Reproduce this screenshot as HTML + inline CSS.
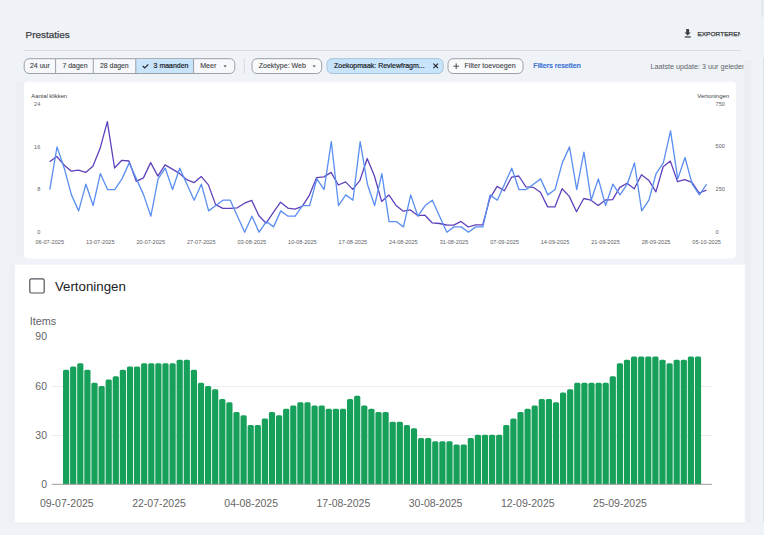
<!DOCTYPE html>
<html><head><meta charset="utf-8">
<style>
html,body{margin:0;padding:0;}
body{width:764px;height:535px;overflow:hidden;background:#eff3f8;position:relative;font-family:"Liberation Sans",sans-serif;}
.abs{position:absolute;white-space:nowrap;}
</style></head><body>
<div class="abs" style="left:744px;top:60px;width:6.5px;height:462px;background:#ebeef2"></div><div class="abs" style="left:762.5px;top:58px;width:1.5px;height:464px;background:#dfe1e4"></div><div class="abs" style="left:761px;top:0;width:3px;height:17px;background:#e6e9ed"></div>
<svg class="abs" style="left:0;top:0" width="764" height="535" viewBox="0 0 764 535" font-family="Liberation Sans, sans-serif">
  <defs><clipPath id="clipE"><rect x="600" y="0" width="140.2" height="50"/></clipPath>
  <clipPath id="clipL"><rect x="600" y="50" width="143.8" height="30"/></clipPath></defs>
  <rect x="23.8" y="81.7" width="712.2" height="176.9" rx="4" fill="#fff"/>
  <rect x="15" y="264.8" width="729.8" height="258" fill="#fff"/>
  <rect x="15" y="522.8" width="729.8" height="1" fill="#e6e9ee"/>
  <!-- header -->
  <text x="25.5" y="38.4" font-size="9.8" fill="#3c4043" stroke="#3c4043" stroke-width="0.25" textLength="44.3" lengthAdjust="spacingAndGlyphs">Prestaties</text>
  <line x1="24" y1="50.5" x2="741" y2="50.5" stroke="#d8dce2" stroke-width="1"/>
  <!-- export -->
  <g fill="#3c4043">
    <path d="M686.2,29.1 h2.9 v3.3 h1.7 l-3.15,3.2 l-3.15,-3.2 h1.7 z"/>
    <rect x="684.8" y="36.3" width="6" height="1.3"/>
  </g>
  <text x="697.4" y="35.8" font-size="6.1" fill="#3c4043" stroke="#3c4043" stroke-width="0.25" textLength="45" lengthAdjust="spacingAndGlyphs" clip-path="url(#clipE)">EXPORTEREN</text>
  <!-- button group -->
  <rect x="24.2" y="58.7" width="210.6" height="14.8" rx="5" fill="#f6f8fb" stroke="#9aa0a6" stroke-width="1"/>
  <path d="M135.8,59.2 H193.6 V73 H135.8 Z" fill="#c7e4fb"/>
  <line x1="55.6" y1="59" x2="55.6" y2="73.3" stroke="#9aa0a6"/>
  <line x1="93.3" y1="59" x2="93.3" y2="73.3" stroke="#9aa0a6"/>
  <line x1="135.8" y1="59" x2="135.8" y2="73.3" stroke="#9aa0a6"/>
  <line x1="193.6" y1="59" x2="193.6" y2="73.3" stroke="#9aa0a6"/>
  <g font-size="7.2" fill="#3c4043" stroke="#3c4043" stroke-width="0.1">
    <text x="29.9" y="68.3" textLength="19.9" lengthAdjust="spacingAndGlyphs">24 uur</text>
    <text x="62.4" y="68.3" textLength="25.1" lengthAdjust="spacingAndGlyphs">7 dagen</text>
    <text x="100" y="68.3" textLength="28.7" lengthAdjust="spacingAndGlyphs">28 dagen</text>
    <text x="153.6" y="68.3" fill="#202124" stroke="#202124" stroke-width="0.2" textLength="34.8" lengthAdjust="spacingAndGlyphs">3 maanden</text>
    <text x="200.2" y="68.3" textLength="16.2" lengthAdjust="spacingAndGlyphs">Meer</text>
  </g>
  <path d="M142.8,66 l1.9,1.9 l3.6,-3.6" fill="none" stroke="#202124" stroke-width="1.1"/>
  <path d="M223.6,65.6 h3 l-1.5,1.6 z" fill="#3c4043"/>
  <line x1="244.3" y1="58.5" x2="244.3" y2="73.8" stroke="#d5d9de"/>
  <!-- chips -->
  <rect x="252" y="58.7" width="69.7" height="14.8" rx="5" fill="#f8fafc" stroke="#9aa0a6"/>
  <text x="258.7" y="68.3" font-size="7.2" fill="#3c4043" stroke="#3c4043" stroke-width="0.1" textLength="47.2" lengthAdjust="spacingAndGlyphs">Zoektype: Web</text>
  <path d="M312.7,65.6 h3 l-1.5,1.6 z" fill="#3c4043"/>
  <rect x="327" y="58.7" width="116.2" height="14.8" rx="5" fill="#c7e4fb" stroke="#a9c3d9"/>
  <text x="334" y="68.3" font-size="7.2" fill="#202124" stroke="#202124" stroke-width="0.2" textLength="90.6" lengthAdjust="spacingAndGlyphs">Zoekopmaak: Reviewfragm...</text>
  <path d="M433.4,63.6 l4.6,4.6 M438,63.6 l-4.6,4.6" stroke="#202124" stroke-width="1.1"/>
  <rect x="448" y="58.7" width="75" height="14.8" rx="5" fill="#f8fafc" stroke="#9aa0a6"/>
  <path d="M456.2,63.4 v5.6 M453.4,66.2 h5.6" stroke="#3c4043" stroke-width="0.9"/>
  <text x="464.5" y="68.3" font-size="7.2" fill="#3c4043" stroke="#3c4043" stroke-width="0.1" textLength="51.1" lengthAdjust="spacingAndGlyphs">Filter toevoegen</text>
  <text x="533.3" y="68.3" font-size="7.2" fill="#1a5fd0" stroke="#1a5fd0" stroke-width="0.2" textLength="47.5" lengthAdjust="spacingAndGlyphs">Filters resetten</text>
  <text x="650.4" y="68.6" font-size="7.3" fill="#5f6368" clip-path="url(#clipL)" textLength="95.6" lengthAdjust="spacingAndGlyphs">Laatste update: 3 uur geleden</text>
</svg>
<!-- top card -->
<div class="abs" style="left:16px;top:82px;width:7.8px;height:174px;background:#ecf0f4"></div><div class="abs" style="left:8.5px;top:264px;width:6.5px;height:260px;background:#ecf0f4"></div>
<svg class="abs" style="left:0;top:0" width="764" height="535" viewBox="0 0 764 535" font-family="Liberation Sans, sans-serif">
  <g font-size="5.6" fill="#5f6368">
    <text x="31.3" y="97.5" fill="#3c4043" textLength="35.8" lengthAdjust="spacingAndGlyphs">Aantal klikken</text>
    <text x="40.3" y="105.6" text-anchor="end">24</text>
    <text x="40.3" y="148.6" text-anchor="end">16</text>
    <text x="40.3" y="190.8" text-anchor="end">8</text>
    <text x="40.3" y="233.6" text-anchor="end">0</text>
    <text x="697.3" y="97.5" fill="#3c4043" textLength="31.8" lengthAdjust="spacingAndGlyphs">Vertoningen</text>
    <text x="715.6" y="105.6">750</text>
    <text x="715.6" y="148.4">500</text>
    <text x="715.6" y="191.2">250</text>
    <text x="715.6" y="233.6">0</text>
    <text x="49.70" y="244.3" text-anchor="middle">06-07-2025</text>
<text x="100.23" y="244.3" text-anchor="middle">13-07-2025</text>
<text x="150.76" y="244.3" text-anchor="middle">20-07-2025</text>
<text x="201.29" y="244.3" text-anchor="middle">27-07-2025</text>
<text x="251.82" y="244.3" text-anchor="middle">03-08-2025</text>
<text x="302.35" y="244.3" text-anchor="middle">10-08-2025</text>
<text x="352.88" y="244.3" text-anchor="middle">17-08-2025</text>
<text x="403.41" y="244.3" text-anchor="middle">24-08-2025</text>
<text x="453.94" y="244.3" text-anchor="middle">31-08-2025</text>
<text x="504.47" y="244.3" text-anchor="middle">07-09-2025</text>
<text x="555.00" y="244.3" text-anchor="middle">14-09-2025</text>
<text x="605.53" y="244.3" text-anchor="middle">21-09-2025</text>
<text x="656.06" y="244.3" text-anchor="middle">28-09-2025</text>
<text x="706.59" y="244.3" text-anchor="middle">05-10-2025</text>
  </g>
  <polyline points="49.60,161.70 56.82,156.50 64.04,164.90 71.25,171.20 78.47,170.10 85.69,172.40 92.91,166.30 100.13,148.30 107.34,121.70 114.56,168.00 121.78,160.30 129.00,161.00 136.22,181.30 143.43,177.90 150.65,162.60 157.87,176.10 165.09,164.90 172.31,169.10 179.52,173.40 186.74,179.70 193.96,182.70 201.18,176.40 208.40,184.90 215.61,204.60 222.83,208.40 230.05,208.40 237.27,207.80 244.49,203.20 251.70,200.40 258.92,215.80 266.14,223.20 273.36,212.30 280.58,202.20 287.79,208.10 295.01,209.20 302.23,206.40 309.45,195.10 316.67,177.60 323.88,176.90 331.10,172.40 338.32,185.00 345.54,181.90 352.76,189.40 359.97,180.30 367.19,158.50 374.41,176.00 381.63,201.40 388.85,194.90 396.06,205.40 403.28,211.20 410.50,209.90 417.72,215.60 424.94,215.20 432.15,222.80 439.37,223.50 446.59,225.00 453.81,225.20 461.03,221.40 468.24,227.00 475.46,224.90 482.68,224.90 489.90,198.40 497.12,186.40 504.33,190.80 511.55,177.20 518.77,176.00 525.99,186.90 533.21,187.30 540.42,192.20 547.64,206.90 554.86,206.90 562.08,188.70 569.30,196.40 576.51,211.70 583.73,198.50 590.95,200.20 598.17,205.50 605.39,200.00 612.60,199.60 619.82,187.40 627.04,183.20 634.26,188.80 641.48,174.70 648.69,180.20 655.91,191.90 663.13,166.70 670.35,161.10 677.57,181.70 684.78,179.70 692.00,182.40 699.22,193.00 706.44,190.20" fill="none" stroke="#5f42bb" stroke-width="1.3" stroke-linejoin="round"/>
  <polyline points="49.80,189.54 57.02,146.87 64.24,168.20 71.45,194.87 78.67,210.87 85.89,184.20 93.11,205.53 100.33,173.54 107.54,189.54 114.76,189.54 121.98,178.87 129.20,162.87 136.42,178.87 143.63,194.87 150.85,216.20 158.07,178.87 165.29,168.20 172.51,189.54 179.72,168.20 186.94,184.20 194.16,200.20 201.38,184.20 208.60,210.87 215.81,205.53 223.03,200.20 230.25,200.20 237.47,216.20 244.69,232.20 251.90,216.20 259.12,232.20 266.34,221.53 273.56,226.87 280.78,210.87 287.99,216.20 295.21,216.20 302.43,205.53 309.65,205.53 316.87,178.87 324.08,189.54 331.30,141.54 338.52,205.53 345.74,194.87 352.96,200.20 360.17,141.54 367.39,184.20 374.61,205.53 381.83,173.54 389.05,221.53 396.26,221.53 403.48,226.87 410.70,194.87 417.92,216.20 425.14,205.53 432.35,200.20 439.57,216.20 446.79,232.20 454.01,226.87 461.23,226.87 468.44,232.20 475.66,226.87 482.88,226.87 490.10,194.87 497.32,200.20 504.53,184.20 511.75,168.20 518.97,189.54 526.19,189.54 533.41,184.20 540.62,178.87 547.84,194.87 555.06,189.54 562.28,162.87 569.50,146.87 576.71,189.54 583.93,152.20 591.15,200.20 598.37,178.87 605.59,205.53 612.80,184.20 620.02,194.87 627.24,184.20 634.46,162.87 641.68,210.87 648.89,200.20 656.11,173.54 663.33,162.87 670.55,130.87 677.77,178.87 684.98,157.54 692.20,184.20 699.42,194.87 706.64,184.20" fill="none" stroke="#5a8ef0" stroke-width="1.3" stroke-linejoin="round"/>
</svg>
<!-- bottom card -->

<svg class="abs" style="left:0;top:0" width="764" height="535" viewBox="0 0 764 535" font-family="Liberation Sans, sans-serif">
  <rect x="29.8" y="278.8" width="14.4" height="14.2" rx="1.5" fill="none" stroke="#4f5358" stroke-width="1.2"/>
  <text x="54.9" y="291.2" font-size="13.3" fill="#202124">Vertoningen</text>
  <text x="29.7" y="324.8" font-size="10.3" fill="#5f6368" textLength="26.6" lengthAdjust="spacingAndGlyphs">Items</text>
  <g font-size="10.5" fill="#666" text-anchor="end">
    <text x="47" y="339.9">90</text>
    <text x="47" y="390">60</text>
    <text x="47" y="438.9">30</text>
    <text x="47" y="487.8">0</text>
  </g>
  <g stroke="#ececec" stroke-width="1">
    <line x1="51.2" y1="386.6" x2="711.9" y2="386.6"/>
    <line x1="51.2" y1="435.5" x2="711.9" y2="435.5"/>
  </g>
  <g fill="#16a05a">
<path d="M63.00,484.3 V371.14 Q63.00,369.64 64.50,369.64 H67.70 Q69.20,369.64 69.20,371.14 V484.3 Z"/>
<path d="M70.10,484.3 V367.88 Q70.10,366.38 71.60,366.38 H74.80 Q76.30,366.38 76.30,367.88 V484.3 Z"/>
<path d="M77.20,484.3 V364.63 Q77.20,363.13 78.70,363.13 H81.90 Q83.40,363.13 83.40,364.63 V484.3 Z"/>
<path d="M84.30,484.3 V371.14 Q84.30,369.64 85.80,369.64 H89.00 Q90.50,369.64 90.50,371.14 V484.3 Z"/>
<path d="M91.40,484.3 V384.16 Q91.40,382.66 92.90,382.66 H96.10 Q97.60,382.66 97.60,384.16 V484.3 Z"/>
<path d="M98.50,484.3 V387.42 Q98.50,385.92 100.00,385.92 H103.20 Q104.70,385.92 104.70,387.42 V484.3 Z"/>
<path d="M105.60,484.3 V380.91 Q105.60,379.41 107.10,379.41 H110.30 Q111.80,379.41 111.80,380.91 V484.3 Z"/>
<path d="M112.70,484.3 V377.65 Q112.70,376.15 114.20,376.15 H117.40 Q118.90,376.15 118.90,377.65 V484.3 Z"/>
<path d="M119.80,484.3 V371.14 Q119.80,369.64 121.30,369.64 H124.50 Q126.00,369.64 126.00,371.14 V484.3 Z"/>
<path d="M126.90,484.3 V367.88 Q126.90,366.38 128.40,366.38 H131.60 Q133.10,366.38 133.10,367.88 V484.3 Z"/>
<path d="M134.00,484.3 V367.88 Q134.00,366.38 135.50,366.38 H138.70 Q140.20,366.38 140.20,367.88 V484.3 Z"/>
<path d="M141.10,484.3 V364.63 Q141.10,363.13 142.60,363.13 H145.80 Q147.30,363.13 147.30,364.63 V484.3 Z"/>
<path d="M148.20,484.3 V364.63 Q148.20,363.13 149.70,363.13 H152.90 Q154.40,363.13 154.40,364.63 V484.3 Z"/>
<path d="M155.30,484.3 V364.63 Q155.30,363.13 156.80,363.13 H160.00 Q161.50,363.13 161.50,364.63 V484.3 Z"/>
<path d="M162.40,484.3 V364.63 Q162.40,363.13 163.90,363.13 H167.10 Q168.60,363.13 168.60,364.63 V484.3 Z"/>
<path d="M169.50,484.3 V364.63 Q169.50,363.13 171.00,363.13 H174.20 Q175.70,363.13 175.70,364.63 V484.3 Z"/>
<path d="M176.60,484.3 V361.37 Q176.60,359.87 178.10,359.87 H181.30 Q182.80,359.87 182.80,361.37 V484.3 Z"/>
<path d="M183.70,484.3 V361.37 Q183.70,359.87 185.20,359.87 H188.40 Q189.90,359.87 189.90,361.37 V484.3 Z"/>
<path d="M190.80,484.3 V371.14 Q190.80,369.64 192.30,369.64 H195.50 Q197.00,369.64 197.00,371.14 V484.3 Z"/>
<path d="M197.90,484.3 V384.16 Q197.90,382.66 199.40,382.66 H202.60 Q204.10,382.66 204.10,384.16 V484.3 Z"/>
<path d="M205.00,484.3 V387.42 Q205.00,385.92 206.50,385.92 H209.70 Q211.20,385.92 211.20,387.42 V484.3 Z"/>
<path d="M212.10,484.3 V390.68 Q212.10,389.18 213.60,389.18 H216.80 Q218.30,389.18 218.30,390.68 V484.3 Z"/>
<path d="M219.20,484.3 V400.44 Q219.20,398.94 220.70,398.94 H223.90 Q225.40,398.94 225.40,400.44 V484.3 Z"/>
<path d="M226.30,484.3 V403.70 Q226.30,402.20 227.80,402.20 H231.00 Q232.50,402.20 232.50,403.70 V484.3 Z"/>
<path d="M233.40,484.3 V413.47 Q233.40,411.97 234.90,411.97 H238.10 Q239.60,411.97 239.60,413.47 V484.3 Z"/>
<path d="M240.50,484.3 V416.72 Q240.50,415.22 242.00,415.22 H245.20 Q246.70,415.22 246.70,416.72 V484.3 Z"/>
<path d="M247.60,484.3 V426.49 Q247.60,424.99 249.10,424.99 H252.30 Q253.80,424.99 253.80,426.49 V484.3 Z"/>
<path d="M254.70,484.3 V426.49 Q254.70,424.99 256.20,424.99 H259.40 Q260.90,424.99 260.90,426.49 V484.3 Z"/>
<path d="M261.80,484.3 V419.98 Q261.80,418.48 263.30,418.48 H266.50 Q268.00,418.48 268.00,419.98 V484.3 Z"/>
<path d="M268.90,484.3 V413.47 Q268.90,411.97 270.40,411.97 H273.60 Q275.10,411.97 275.10,413.47 V484.3 Z"/>
<path d="M276.00,484.3 V416.72 Q276.00,415.22 277.50,415.22 H280.70 Q282.20,415.22 282.20,416.72 V484.3 Z"/>
<path d="M283.10,484.3 V410.21 Q283.10,408.71 284.60,408.71 H287.80 Q289.30,408.71 289.30,410.21 V484.3 Z"/>
<path d="M290.20,484.3 V406.96 Q290.20,405.46 291.70,405.46 H294.90 Q296.40,405.46 296.40,406.96 V484.3 Z"/>
<path d="M297.30,484.3 V403.70 Q297.30,402.20 298.80,402.20 H302.00 Q303.50,402.20 303.50,403.70 V484.3 Z"/>
<path d="M304.40,484.3 V403.70 Q304.40,402.20 305.90,402.20 H309.10 Q310.60,402.20 310.60,403.70 V484.3 Z"/>
<path d="M311.50,484.3 V406.96 Q311.50,405.46 313.00,405.46 H316.20 Q317.70,405.46 317.70,406.96 V484.3 Z"/>
<path d="M318.60,484.3 V406.96 Q318.60,405.46 320.10,405.46 H323.30 Q324.80,405.46 324.80,406.96 V484.3 Z"/>
<path d="M325.70,484.3 V410.21 Q325.70,408.71 327.20,408.71 H330.40 Q331.90,408.71 331.90,410.21 V484.3 Z"/>
<path d="M332.80,484.3 V410.21 Q332.80,408.71 334.30,408.71 H337.50 Q339.00,408.71 339.00,410.21 V484.3 Z"/>
<path d="M339.90,484.3 V410.21 Q339.90,408.71 341.40,408.71 H344.60 Q346.10,408.71 346.10,410.21 V484.3 Z"/>
<path d="M347.00,484.3 V400.44 Q347.00,398.94 348.50,398.94 H351.70 Q353.20,398.94 353.20,400.44 V484.3 Z"/>
<path d="M354.10,484.3 V397.19 Q354.10,395.69 355.60,395.69 H358.80 Q360.30,395.69 360.30,397.19 V484.3 Z"/>
<path d="M361.20,484.3 V406.96 Q361.20,405.46 362.70,405.46 H365.90 Q367.40,405.46 367.40,406.96 V484.3 Z"/>
<path d="M368.30,484.3 V410.21 Q368.30,408.71 369.80,408.71 H373.00 Q374.50,408.71 374.50,410.21 V484.3 Z"/>
<path d="M375.40,484.3 V413.47 Q375.40,411.97 376.90,411.97 H380.10 Q381.60,411.97 381.60,413.47 V484.3 Z"/>
<path d="M382.50,484.3 V413.47 Q382.50,411.97 384.00,411.97 H387.20 Q388.70,411.97 388.70,413.47 V484.3 Z"/>
<path d="M389.60,484.3 V423.24 Q389.60,421.74 391.10,421.74 H394.30 Q395.80,421.74 395.80,423.24 V484.3 Z"/>
<path d="M396.70,484.3 V423.24 Q396.70,421.74 398.20,421.74 H401.40 Q402.90,421.74 402.90,423.24 V484.3 Z"/>
<path d="M403.80,484.3 V426.49 Q403.80,424.99 405.30,424.99 H408.50 Q410.00,424.99 410.00,426.49 V484.3 Z"/>
<path d="M410.90,484.3 V429.75 Q410.90,428.25 412.40,428.25 H415.60 Q417.10,428.25 417.10,429.75 V484.3 Z"/>
<path d="M418.00,484.3 V439.52 Q418.00,438.02 419.50,438.02 H422.70 Q424.20,438.02 424.20,439.52 V484.3 Z"/>
<path d="M425.10,484.3 V439.52 Q425.10,438.02 426.60,438.02 H429.80 Q431.30,438.02 431.30,439.52 V484.3 Z"/>
<path d="M432.20,484.3 V442.77 Q432.20,441.27 433.70,441.27 H436.90 Q438.40,441.27 438.40,442.77 V484.3 Z"/>
<path d="M439.30,484.3 V442.77 Q439.30,441.27 440.80,441.27 H444.00 Q445.50,441.27 445.50,442.77 V484.3 Z"/>
<path d="M446.40,484.3 V442.77 Q446.40,441.27 447.90,441.27 H451.10 Q452.60,441.27 452.60,442.77 V484.3 Z"/>
<path d="M453.50,484.3 V446.03 Q453.50,444.53 455.00,444.53 H458.20 Q459.70,444.53 459.70,446.03 V484.3 Z"/>
<path d="M460.60,484.3 V446.03 Q460.60,444.53 462.10,444.53 H465.30 Q466.80,444.53 466.80,446.03 V484.3 Z"/>
<path d="M467.70,484.3 V439.52 Q467.70,438.02 469.20,438.02 H472.40 Q473.90,438.02 473.90,439.52 V484.3 Z"/>
<path d="M474.80,484.3 V436.26 Q474.80,434.76 476.30,434.76 H479.50 Q481.00,434.76 481.00,436.26 V484.3 Z"/>
<path d="M481.90,484.3 V436.26 Q481.90,434.76 483.40,434.76 H486.60 Q488.10,434.76 488.10,436.26 V484.3 Z"/>
<path d="M489.00,484.3 V436.26 Q489.00,434.76 490.50,434.76 H493.70 Q495.20,434.76 495.20,436.26 V484.3 Z"/>
<path d="M496.10,484.3 V436.26 Q496.10,434.76 497.60,434.76 H500.80 Q502.30,434.76 502.30,436.26 V484.3 Z"/>
<path d="M503.20,484.3 V426.49 Q503.20,424.99 504.70,424.99 H507.90 Q509.40,424.99 509.40,426.49 V484.3 Z"/>
<path d="M510.30,484.3 V419.98 Q510.30,418.48 511.80,418.48 H515.00 Q516.50,418.48 516.50,419.98 V484.3 Z"/>
<path d="M517.40,484.3 V413.47 Q517.40,411.97 518.90,411.97 H522.10 Q523.60,411.97 523.60,413.47 V484.3 Z"/>
<path d="M524.50,484.3 V410.21 Q524.50,408.71 526.00,408.71 H529.20 Q530.70,408.71 530.70,410.21 V484.3 Z"/>
<path d="M531.60,484.3 V406.96 Q531.60,405.46 533.10,405.46 H536.30 Q537.80,405.46 537.80,406.96 V484.3 Z"/>
<path d="M538.70,484.3 V400.44 Q538.70,398.94 540.20,398.94 H543.40 Q544.90,398.94 544.90,400.44 V484.3 Z"/>
<path d="M545.80,484.3 V400.44 Q545.80,398.94 547.30,398.94 H550.50 Q552.00,398.94 552.00,400.44 V484.3 Z"/>
<path d="M552.90,484.3 V403.70 Q552.90,402.20 554.40,402.20 H557.60 Q559.10,402.20 559.10,403.70 V484.3 Z"/>
<path d="M560.00,484.3 V393.93 Q560.00,392.43 561.50,392.43 H564.70 Q566.20,392.43 566.20,393.93 V484.3 Z"/>
<path d="M567.10,484.3 V390.68 Q567.10,389.18 568.60,389.18 H571.80 Q573.30,389.18 573.30,390.68 V484.3 Z"/>
<path d="M574.20,484.3 V384.16 Q574.20,382.66 575.70,382.66 H578.90 Q580.40,382.66 580.40,384.16 V484.3 Z"/>
<path d="M581.30,484.3 V384.16 Q581.30,382.66 582.80,382.66 H586.00 Q587.50,382.66 587.50,384.16 V484.3 Z"/>
<path d="M588.40,484.3 V384.16 Q588.40,382.66 589.90,382.66 H593.10 Q594.60,382.66 594.60,384.16 V484.3 Z"/>
<path d="M595.50,484.3 V384.16 Q595.50,382.66 597.00,382.66 H600.20 Q601.70,382.66 601.70,384.16 V484.3 Z"/>
<path d="M602.60,484.3 V384.16 Q602.60,382.66 604.10,382.66 H607.30 Q608.80,382.66 608.80,384.16 V484.3 Z"/>
<path d="M609.70,484.3 V377.65 Q609.70,376.15 611.20,376.15 H614.40 Q615.90,376.15 615.90,377.65 V484.3 Z"/>
<path d="M616.80,484.3 V364.63 Q616.80,363.13 618.30,363.13 H621.50 Q623.00,363.13 623.00,364.63 V484.3 Z"/>
<path d="M623.90,484.3 V361.37 Q623.90,359.87 625.40,359.87 H628.60 Q630.10,359.87 630.10,361.37 V484.3 Z"/>
<path d="M631.00,484.3 V358.12 Q631.00,356.62 632.50,356.62 H635.70 Q637.20,356.62 637.20,358.12 V484.3 Z"/>
<path d="M638.10,484.3 V358.12 Q638.10,356.62 639.60,356.62 H642.80 Q644.30,356.62 644.30,358.12 V484.3 Z"/>
<path d="M645.20,484.3 V358.12 Q645.20,356.62 646.70,356.62 H649.90 Q651.40,356.62 651.40,358.12 V484.3 Z"/>
<path d="M652.30,484.3 V358.12 Q652.30,356.62 653.80,356.62 H657.00 Q658.50,356.62 658.50,358.12 V484.3 Z"/>
<path d="M659.40,484.3 V361.37 Q659.40,359.87 660.90,359.87 H664.10 Q665.60,359.87 665.60,361.37 V484.3 Z"/>
<path d="M666.50,484.3 V364.63 Q666.50,363.13 668.00,363.13 H671.20 Q672.70,363.13 672.70,364.63 V484.3 Z"/>
<path d="M673.60,484.3 V361.37 Q673.60,359.87 675.10,359.87 H678.30 Q679.80,359.87 679.80,361.37 V484.3 Z"/>
<path d="M680.70,484.3 V361.37 Q680.70,359.87 682.20,359.87 H685.40 Q686.90,359.87 686.90,361.37 V484.3 Z"/>
<path d="M687.80,484.3 V358.12 Q687.80,356.62 689.30,356.62 H692.50 Q694.00,356.62 694.00,358.12 V484.3 Z"/>
<path d="M694.90,484.3 V358.12 Q694.90,356.62 696.40,356.62 H699.60 Q701.10,356.62 701.10,358.12 V484.3 Z"/>
  </g>
  <line x1="51.8" y1="484.3" x2="711.9" y2="484.3" stroke="#9a9a9a" stroke-width="1"/>
  <g font-size="10.5" fill="#666">
<text x="66.80" y="506.8" text-anchor="middle">09-07-2025</text>
<text x="159.00" y="506.8" text-anchor="middle">22-07-2025</text>
<text x="251.19" y="506.8" text-anchor="middle">04-08-2025</text>
<text x="343.39" y="506.8" text-anchor="middle">17-08-2025</text>
<text x="435.58" y="506.8" text-anchor="middle">30-08-2025</text>
<text x="527.78" y="506.8" text-anchor="middle">12-09-2025</text>
<text x="619.98" y="506.8" text-anchor="middle">25-09-2025</text>
  </g>
</svg>
</body></html>
